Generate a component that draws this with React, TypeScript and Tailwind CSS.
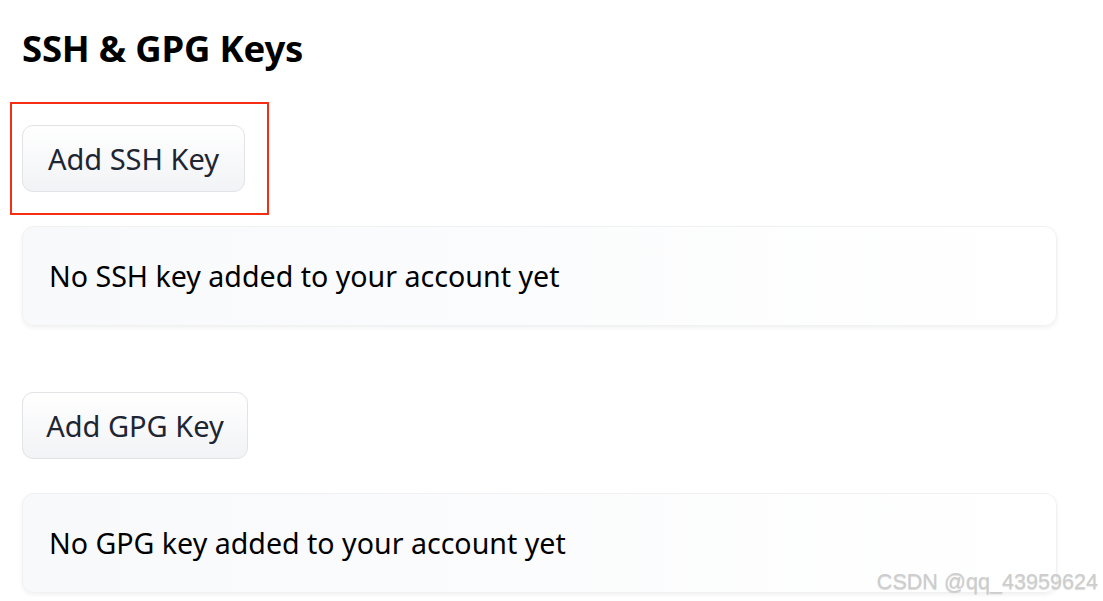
export default function App() {
  return (
    <div
      className="min-h-screen bg-white px-[22px] pt-[26px] text-[#111827]"
      style={{ fontFamily: '"Noto Sans", "Open Sans", sans-serif' }}
    >
      <h1 className="text-[36.5px] font-bold leading-[44px] tracking-[-0.2px] text-black">SSH &amp; GPG Keys</h1>

      <div className="mt-[32px] -ml-[12px] w-[259px] border-2 border-[#f52d12] px-[10px] py-[21px]">
        <KeyButton label="Add SSH Key" width="w-[223px]" />
      </div>

      <EmptyCard text="No SSH key added to your account yet" className="mt-[11px]" />

      <div className="mt-[66px]">
        <KeyButton label="Add GPG Key" width="w-[226px]" />
      </div>

      <EmptyCard text="No GPG key added to your account yet" className="mt-[34px]" />

      <div
        className="absolute right-[5px] top-[566px] text-[21.6px] text-[#cdcdcd] [text-shadow:0_1px_1px_rgba(0,0,0,0.15)]"
        style={{ fontFamily: '"Liberation Sans", Arial, sans-serif' }}
      >
        CSDN @qq_43959624
      </div>
    </div>
  );
}

function KeyButton({ label, width }: { label: string; width: string }) {
  return (
    <button
      className={`${width} h-[67px] rounded-[11px] border-[1.5px] border-[#e2e3e7] bg-gradient-to-b from-white to-[#f2f3f6] text-[29px] text-[#1e2533]`}
    >
      {label}
    </button>
  );
}

function EmptyCard({ text, className }: { text: string; className: string }) {
  return (
    <div
      className={`${className} flex h-[100px] w-[1035px] items-center rounded-[12px] border border-[#f0f1f3] bg-gradient-to-r from-[#f8f9fb] to-white px-[26px] text-[28.6px] text-black shadow-[0_2px_4px_rgba(0,0,0,0.06)]`}
    >
      {text}
    </div>
  );
}
